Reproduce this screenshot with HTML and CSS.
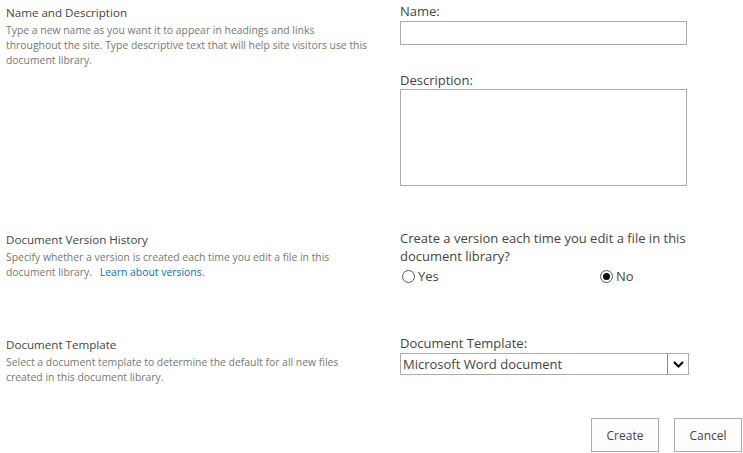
FILE: index.html
```html
<!DOCTYPE html>
<html>
<head>
<meta charset="utf-8">
<link rel="stylesheet" href="styles.css">
</head>
<body>
<div class="page">
  <div class="section s1">
    <div class="left">
      <div class="heading">Name and Description</div>
      <div class="desc">Type a new name as you want it to appear in headings and links throughout the site. Type descriptive text that will help site visitors use this document library.</div>
    </div>
    <div class="right">
      <div class="label">Name:</div>
      <div class="input"></div>
      <div class="label label-desc">Description:</div>
      <div class="textarea"></div>
    </div>
  </div>
  <div class="section s2">
    <div class="left">
      <div class="heading">Document Version History</div>
      <div class="desc"><span>Specify whether a version is created each time you edit a file in this document library.</span> <a class="link" href="#">Learn about versions.</a></div>
    </div>
    <div class="right">
      <div class="label label-wrap">Create a version each time you edit a file in this document library?</div>
      <div class="radios">
        <div class="radio-opt yes"><span class="radio"></span><span class="radio-text">Yes</span></div>
        <div class="radio-opt"><span class="radio checked"></span><span class="radio-text">No</span></div>
      </div>
    </div>
  </div>
  <div class="section s3">
    <div class="left">
      <div class="heading">Document Template</div>
      <div class="desc">Select a document template to determine the default for all new files created in this document library.</div>
    </div>
    <div class="right">
      <div class="label">Document Template:</div>
      <div class="select">
        <span class="select-text">Microsoft Word document</span>
        <span class="select-arrow"><svg width="11" height="7" viewBox="0 0 11 7"><path d="M1 1 L5.5 5.5 L10 1" fill="none" stroke="#000" stroke-width="2"/></svg></span>
      </div>
    </div>
  </div>
  <div class="buttons">
    <button class="btn">Create</button>
    <button class="btn">Cancel</button>
  </div>
</div>
</body>
</html>
```
FILE: styles.css
```css
* { box-sizing: border-box; }
html, body { margin: 0; padding: 0; background: #fff; }
body { font-family: "Open Sans", "Segoe UI", sans-serif; color: #444; }
.page { width: 743px; height: 453px; overflow: hidden; }
.section { display: flex; padding-left: 6px; }
.s1 { height: 227px; }
.s2 { height: 105px; }
.s3 { height: 86px; }
.left { width: 364px; flex-shrink: 0; padding-top: 5px; }
.right { margin-left: 30px; width: 343px; padding-top: 2px; }
.heading { font-size: 11.6px; line-height: 16px; color: #444; }
.desc { font-size: 10.4px; line-height: 15px; color: #777; margin-top: 2px; }
.link { color: #0072c6; text-decoration: none; margin-left: 5px; }
.label { font-size: 13px; line-height: 18px; color: #444; }
.label-wrap { width: 300px; }
.input { width: 287px; height: 24px; border: 1px solid #ababab; margin-top: 1px; }
.label-desc { margin-top: 26px; }
.textarea { width: 287px; height: 97px; border: 1px solid #ababab; }
.radios { display: flex; height: 22px; align-items: center; padding-left: 2px; }
.radio-opt { display: flex; align-items: center; flex-shrink: 0; }
.radio-opt.yes { width: 198px; }
.radio { width: 13px; height: 13px; border: 1px solid #555; border-radius: 50%; display: flex; align-items: center; justify-content: center; }
.radio.checked::after { content: ""; width: 7px; height: 7px; border-radius: 50%; background: #111; }
.radio-text { font-size: 13px; margin-left: 3px; color: #444; }
.select { width: 289px; height: 22px; border: 1px solid #ababab; margin-top: 1px; display: flex; align-items: center; justify-content: space-between; }
.select-text { font-size: 13px; color: #444; padding-left: 2px; }
.select-arrow { width: 21px; height: 20px; border-left: 1px solid #888; background: #fff; display: flex; align-items: center; justify-content: center; }
.buttons { display: flex; justify-content: flex-end; gap: 15px; padding-right: 1px; }
.btn { width: 68px; height: 34px; border: 1px solid #ababab; background: #fdfdfd; font-family: inherit; font-size: 12px; color: #444; padding: 0; }
```
